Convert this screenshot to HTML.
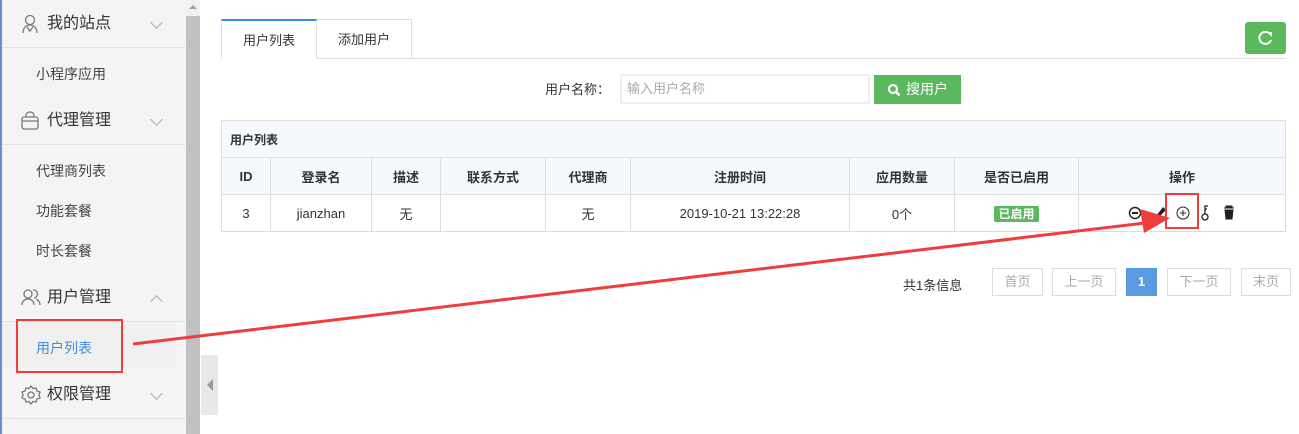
<!DOCTYPE html>
<html><head><meta charset="utf-8"><style>
*{margin:0;padding:0;box-sizing:border-box}
body{width:1299px;height:434px;overflow:hidden;background:#fff;font-family:"Liberation Sans","Noto Sans CJK SC",sans-serif;font-size:13px;color:#333;position:relative}
.a{position:absolute}
.side{left:0;top:0;width:186px;height:434px;background:#f4f4f4;border-left:2px solid #6a8fc8}
.menu{left:2px;width:183px;height:48px;border-bottom:1px solid #e2e2e2;font-size:16px;color:#333;line-height:48px}
.menu span.t{position:absolute;left:45px}
.menu svg.ic{position:absolute;left:19px;top:14px}
.menu .ch{position:absolute;left:150px;top:18px;width:9px;height:9px;border-right:1px solid #aaa;border-bottom:1px solid #aaa;transform:rotate(45deg)}
.menu .up{top:23px;transform:rotate(-135deg)}
.sub{left:36px;font-size:14px;color:#444}
table{border-collapse:collapse;position:absolute;left:221px;top:120px;width:1065px}
td,th{border:1px solid #ddd;text-align:center;font-size:13px;height:37px}
th{background:#f5f9fd;font-weight:bold;color:#333}
.pg{top:268px;height:28px;border:1px solid #ddd;color:#aaa;font-size:13px;line-height:26px;text-align:center}
</style></head><body>
<div class="a side"></div>
<div class="a menu" style="top:0"><svg class="ic" width="18" height="20" viewBox="0 0 18 20" fill="none" stroke="#777" stroke-width="1.3"><circle cx="9" cy="6" r="4.5"/><path d="M2 19c0-5 3-8 7-8s7 3 7 8M6 13l3 4 3-4"/></svg><span class="t">我的站点</span><div class="ch"></div></div>
<div class="a sub" style="top:64px">小程序应用</div>
<div class="a menu" style="top:97px"><svg class="ic" width="18" height="20" viewBox="0 0 18 20" fill="none" stroke="#777" stroke-width="1.3"><rect x="1" y="6" width="16" height="12" rx="2"/><path d="M5 6V4a4 3 0 0 1 8 0v2M1 10h16"/></svg><span class="t">代理管理</span><div class="ch"></div></div>
<div class="a sub" style="top:161px">代理商列表</div>
<div class="a sub" style="top:201px">功能套餐</div>
<div class="a sub" style="top:241px">时长套餐</div>
<div class="a menu" style="top:274px"><svg class="ic" width="20" height="20" viewBox="0 0 20 20" fill="none" stroke="#777" stroke-width="1.3"><circle cx="7" cy="6" r="4"/><path d="M1 17c0-4 3-6 6-6s6 2 6 6M12 2a4 4 0 0 1 1 8M15 11c2 1 4 3 4 6"/></svg><span class="t">用户管理</span><div class="ch up"></div></div>
<div class="a" style="left:2px;top:323px;width:173px;height:45px;background:#f0f0f0"></div>
<div class="a sub" style="top:338px;color:#3a8ee6">用户列表</div>
<div class="a" style="left:16px;top:319px;width:107px;height:54px;border:2px solid #f03c3c"></div>
<div class="a menu" style="top:371px"><svg class="ic" width="20" height="20" viewBox="0 0 20 20" fill="none" stroke="#777" stroke-width="1.3"><path d="M10 1l2 2.5 3-.5 1 3 3 1-1 3 1 3-3 1-1 3-3-.5L10 19l-2-2.5-3 .5-1-3-3-1 1-3-1-3 3-1 1-3 3 .5z"/><circle cx="10" cy="10" r="3"/></svg><span class="t">权限管理</span><div class="ch"></div></div>
<div class="a" style="left:186px;top:0;width:14px;height:434px;background:#c1c1c1"></div>
<div class="a" style="left:186px;top:0;width:14px;height:16px;background:#f1f1f1"></div>
<div class="a" style="left:189px;top:5px;width:0;height:0;border-left:4px solid transparent;border-right:4px solid transparent;border-bottom:4px solid #a0a0a0"></div>
<div class="a" style="left:201px;top:355px;width:17px;height:60px;background:#e8e8e8"></div>
<div class="a" style="left:207px;top:379px;border-top:6px solid transparent;border-bottom:6px solid transparent;border-right:6px solid #999"></div>

<div class="a" style="left:221px;top:58px;width:1065px;height:1px;background:#ddd"></div>
<div class="a" style="left:221px;top:19px;width:96px;height:40px;background:#fff;border:1px solid #ddd;border-top:2px solid #3a8ee6;border-bottom:none;text-align:center;line-height:40px;font-size:13px">用户列表</div>
<div class="a" style="left:317px;top:19px;width:95px;height:40px;border:1px solid #ddd;border-left:none;text-align:center;line-height:40px;font-size:13px">添加用户</div>
<div class="a" style="left:1245px;top:22px;width:41px;height:32px;background:#5cb85c;border-radius:3px"><svg width="41" height="32" viewBox="0 0 41 32"><path d="M25 12a6 6 0 1 0 1 6" fill="none" stroke="#fff" stroke-width="2"/><path d="M22 10h5v5z" fill="#fff"/></svg></div>

<div class="a" style="left:545px;top:79px;font-size:13px">用户名称：</div>
<div class="a" style="left:620px;top:74px;width:250px;height:30px;border:2px solid #eee;color:#aaa;padding-left:5px;line-height:26px;font-size:13px">输入用户名称</div>
<div class="a" style="left:874px;top:75px;width:87px;height:29px;background:#5cb85c;color:#fff;font-size:14px;line-height:29px;padding-left:32px"><svg class="a" style="left:13px;top:8px" width="14" height="14" viewBox="0 0 14 14"><circle cx="6" cy="6" r="4" fill="none" stroke="#fff" stroke-width="2.2"/><path d="M9 9l3.5 3.5" stroke="#fff" stroke-width="2.5"/></svg>搜用户</div>

<table>
<tr><th colspan="9" style="text-align:left;padding-left:8px;font-size:12px;height:37px">用户列表</th></tr>
<tr><th style="width:49px">ID</th><th style="width:101px">登录名</th><th style="width:69px">描述</th><th style="width:105px">联系方式</th><th style="width:85px">代理商</th><th style="width:219px">注册时间</th><th style="width:105px">应用数量</th><th style="width:124px">是否已启用</th><th>操作</th></tr>
<tr><td>3</td><td>jianzhan</td><td>无</td><td></td><td>无</td><td>2019-10-21 13:22:28</td><td>0个</td><td><span style="background:#5cb85c;color:#fff;font-weight:bold;font-size:12px;padding:1px 4px;border-radius:2px">已启用</span></td><td></td></tr>
</table>
<svg class="a" style="left:1125px;top:203px" width="120" height="20" viewBox="0 0 120 20">
<circle cx="10" cy="10" r="5.5" fill="none" stroke="#222" stroke-width="1.5"/><path d="M7 10h6" stroke="#222" stroke-width="2"/>
<path d="M38 4l3 3-8 8-3 1 1-3z" fill="#222"/>
<circle cx="58" cy="10" r="6" fill="none" stroke="#222" stroke-width="1"/><path d="M55 10h6M58 7v6" stroke="#222" stroke-width="1"/>
<circle cx="80" cy="14" r="3" fill="none" stroke="#222" stroke-width="1.3"/><path d="M80 11V3h3M80 6h2" stroke="#222" stroke-width="1.3" fill="none"/>
<path d="M99 5h10M101 5V3h6v2M100 7h8l-1 9h-6z" fill="#222" stroke="#222" stroke-width="1"/>
</svg>
<div class="a" style="left:1165px;top:193px;width:34px;height:36px;border:2px solid #f03c3c"></div>

<div class="a" style="left:903px;top:275px;font-size:13px">共1条信息</div>
<div class="a pg" style="left:992px;width:51px">首页</div>
<div class="a pg" style="left:1052px;width:64px">上一页</div>
<div class="a pg" style="left:1126px;width:31px;background:#5a9ae0;border-color:#5a9ae0;color:#fff;font-weight:bold">1</div>
<div class="a pg" style="left:1167px;width:64px">下一页</div>
<div class="a pg" style="left:1241px;width:50px">末页</div>

<svg class="a" style="left:0;top:0" width="1299" height="434"><line x1="133" y1="344" x2="1145" y2="223" stroke="#f03c3c" stroke-width="3"/><path d="M1170 218l-30-9 4 24z" fill="#f03c3c"/></svg>
</body></html>
